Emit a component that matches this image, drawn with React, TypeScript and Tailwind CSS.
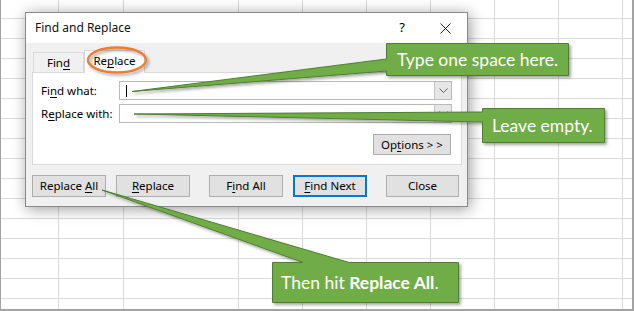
import React from "react";

const U = ({ children }: { children: React.ReactNode }) => (
  <span className="underline underline-offset-2 decoration-1">{children}</span>
);

function Chevron() {
  return (
    <div className="w-[17px] h-full bg-[#e6e6e6] border-l border-[#c4c4c4] flex items-center justify-center">
      <svg width="9" height="6" viewBox="0 0 9 6">
        <polyline points="0.5,0.5 4.5,4.5 8.5,0.5" fill="none" stroke="#606060" strokeWidth="1" />
      </svg>
    </div>
  );
}

function Btn({ children, className = "" }: { children: React.ReactNode; className?: string }) {
  return (
    <div
      className={
        "h-[22px] bg-[#e1e1e1] border border-[#adadad] flex items-center justify-center text-black " + className
      }
    >
      {children}
    </div>
  );
}

export default function App() {
  return (
    <div className="relative w-[634px] h-[311px] overflow-hidden bg-white border-l border-r-2 border-b-2 border-[#a3a3a3]">
      {/* spreadsheet grid */}
      <div className="absolute inset-0 flex bg-[repeating-linear-gradient(to_bottom,transparent_0px,transparent_18px,#dadada_18px,#dadada_19px,transparent_19px,transparent_20px)]">
        <div className="w-[58px] h-full border-r border-[#dadada]" />
        <div className="w-[65px] h-full border-r border-[#dadada]" />
        <div className="w-[115px] h-full border-r border-[#dadada]" />
        <div className="w-[64px] h-full border-r border-[#dadada]" />
        <div className="w-[64px] h-full border-r border-[#dadada]" />
        <div className="w-[64px] h-full border-r border-[#dadada]" />
        <div className="w-[64px] h-full border-r border-[#dadada]" />
        <div className="w-[64px] h-full border-r border-[#dadada]" />
        <div className="w-[64px] h-full border-r border-[#dadada]" />
        <div className="flex-1 h-full" />
      </div>

      {/* dialog */}
      <div className="absolute left-[24px] top-[12px] w-[443px] h-[195px] border border-[#8a8a8a] bg-[#f0f0f0] flex flex-col shadow-[2px_2px_14px_rgba(0,0,0,0.4)] text-[11.5px] text-black font-['Noto_Sans',sans-serif]">
        <div className="h-[30px] bg-white flex items-center pl-[9px] pr-[16px]">
          <span className="flex-1 text-[12px] text-[#111]">Find and Replace</span>
          <span className="text-[13px] mr-[35px]">?</span>
          <svg width="11" height="11" viewBox="0 0 11 11">
            <line x1="0.5" y1="0.5" x2="10.5" y2="10.5" stroke="#222" strokeWidth="1" />
            <line x1="10.5" y1="0.5" x2="0.5" y2="10.5" stroke="#222" strokeWidth="1" />
          </svg>
        </div>

        <div className="flex-1 flex flex-col pl-[6px] pt-[7px]">
          {/* tabs */}
          <div className="h-[22px] flex items-end">
            <div className="ml-[1px] w-[51px] h-[20px] border border-b-0 border-[#d9d9d9] flex items-center justify-center">
              <span>
                Fin<U>d</U>
              </span>
            </div>
            <div className="relative w-[61px] h-[23px] -mb-px bg-white border border-b-0 border-[#d9d9d9] flex items-center justify-center pb-[2px]">
              <span>
                Re<U>p</U>lace
              </span>
            </div>
          </div>

          {/* panel */}
          <div className="w-[430px] h-[93px] bg-white border border-[#d9d9d9] flex flex-col pl-[8px] pr-[9px] pt-[8px]">
            <div className="h-[19px] flex items-center">
              <div className="w-[78px]">
                Fi<U>n</U>d what:
              </div>
              <div className="flex-1 h-[19px] border border-[#b9b9b9] flex items-stretch">
                <div className="flex-1 flex items-center pl-[6px]">
                  <div className="w-px h-[12px] bg-black" />
                </div>
                <Chevron />
              </div>
            </div>
            <div className="h-[19px] mt-[4px] flex items-center">
              <div className="w-[78px]">
                R<U>e</U>place with:
              </div>
              <div className="flex-1 h-[19px] border border-[#b9b9b9] flex items-stretch">
                <div className="flex-1" />
                <Chevron />
              </div>
            </div>
            <div className="mt-[11px] flex justify-end pr-[1px]">
              <Btn className="w-[78px] !h-[21px]">
                <span>
                  Op<U>t</U>ions &gt; &gt;
                </span>
              </Btn>
            </div>
          </div>

          {/* buttons */}
          <div className="mt-[10px] flex">
            <Btn className="w-[74px]">
              <span>
                Replace <U>A</U>ll
              </span>
            </Btn>
            <Btn className="w-[74px] ml-[10px]">
              <span>
                <U>R</U>eplace
              </span>
            </Btn>
            <Btn className="w-[74px] ml-[19px]">
              <span>
                F<U>i</U>nd All
              </span>
            </Btn>
            <Btn className="w-[74px] ml-[10px] !border-2 !border-[#0078d7]">
              <span>
                <U>F</U>ind Next
              </span>
            </Btn>
            <Btn className="w-[73px] ml-[19px]">
              <span>Close</span>
            </Btn>
          </div>
        </div>
      </div>

      {/* callout shapes and ellipse */}
      <svg className="absolute left-0 top-0 z-20" width="634" height="311" viewBox="0 0 634 311">
        <defs>
          <filter id="sh" x="-20%" y="-20%" width="140%" height="160%">
            <feDropShadow dx="2" dy="2" stdDeviation="1.5" floodColor="#000" floodOpacity="0.35" />
          </filter>
        </defs>
        <ellipse cx="116" cy="60" rx="29" ry="12.5" fill="none" stroke="#ed7d31" strokeWidth="2.5" filter="url(#sh)" />
        <path
          d="M385.5,43.5 H567.5 V75.5 H385.5 V71 L131,91.5 L385.5,59 Z"
          fill="#70ad47"
          stroke="#507e32"
          strokeWidth="1"
          filter="url(#sh)"
        />
        <path
          d="M481.5,108.5 H603.5 V142.5 H481.5 V122 L133,114 L481.5,112 Z"
          fill="#70ad47"
          stroke="#507e32"
          strokeWidth="1"
          filter="url(#sh)"
        />
        <path
          d="M271.5,262.5 H302 L101,190 L348,262.5 H457.5 V302.5 H271.5 Z"
          fill="#70ad47"
          stroke="#507e32"
          strokeWidth="1"
          filter="url(#sh)"
        />
      </svg>

      {/* callout texts */}
      <div className="absolute z-30 left-[386px] top-[44px] w-[181px] h-[31px] flex items-center pl-[10px] text-white text-[17.5px] font-['Lato',sans-serif] leading-none">
        Type one space here.
      </div>
      <div className="absolute z-30 left-[482px] top-[109px] w-[121px] h-[33px] flex items-center pl-[9px] text-white text-[17.5px] font-['Lato',sans-serif] leading-none">
        Leave empty.
      </div>
      <div className="absolute z-30 left-[272px] top-[263px] w-[185px] h-[39px] flex items-center pl-[8px] text-white text-[17.5px] font-['Lato',sans-serif] leading-none">
        <span>
          Then hit <b className="font-bold">Replace All</b>.
        </span>
      </div>
    </div>
  );
}
